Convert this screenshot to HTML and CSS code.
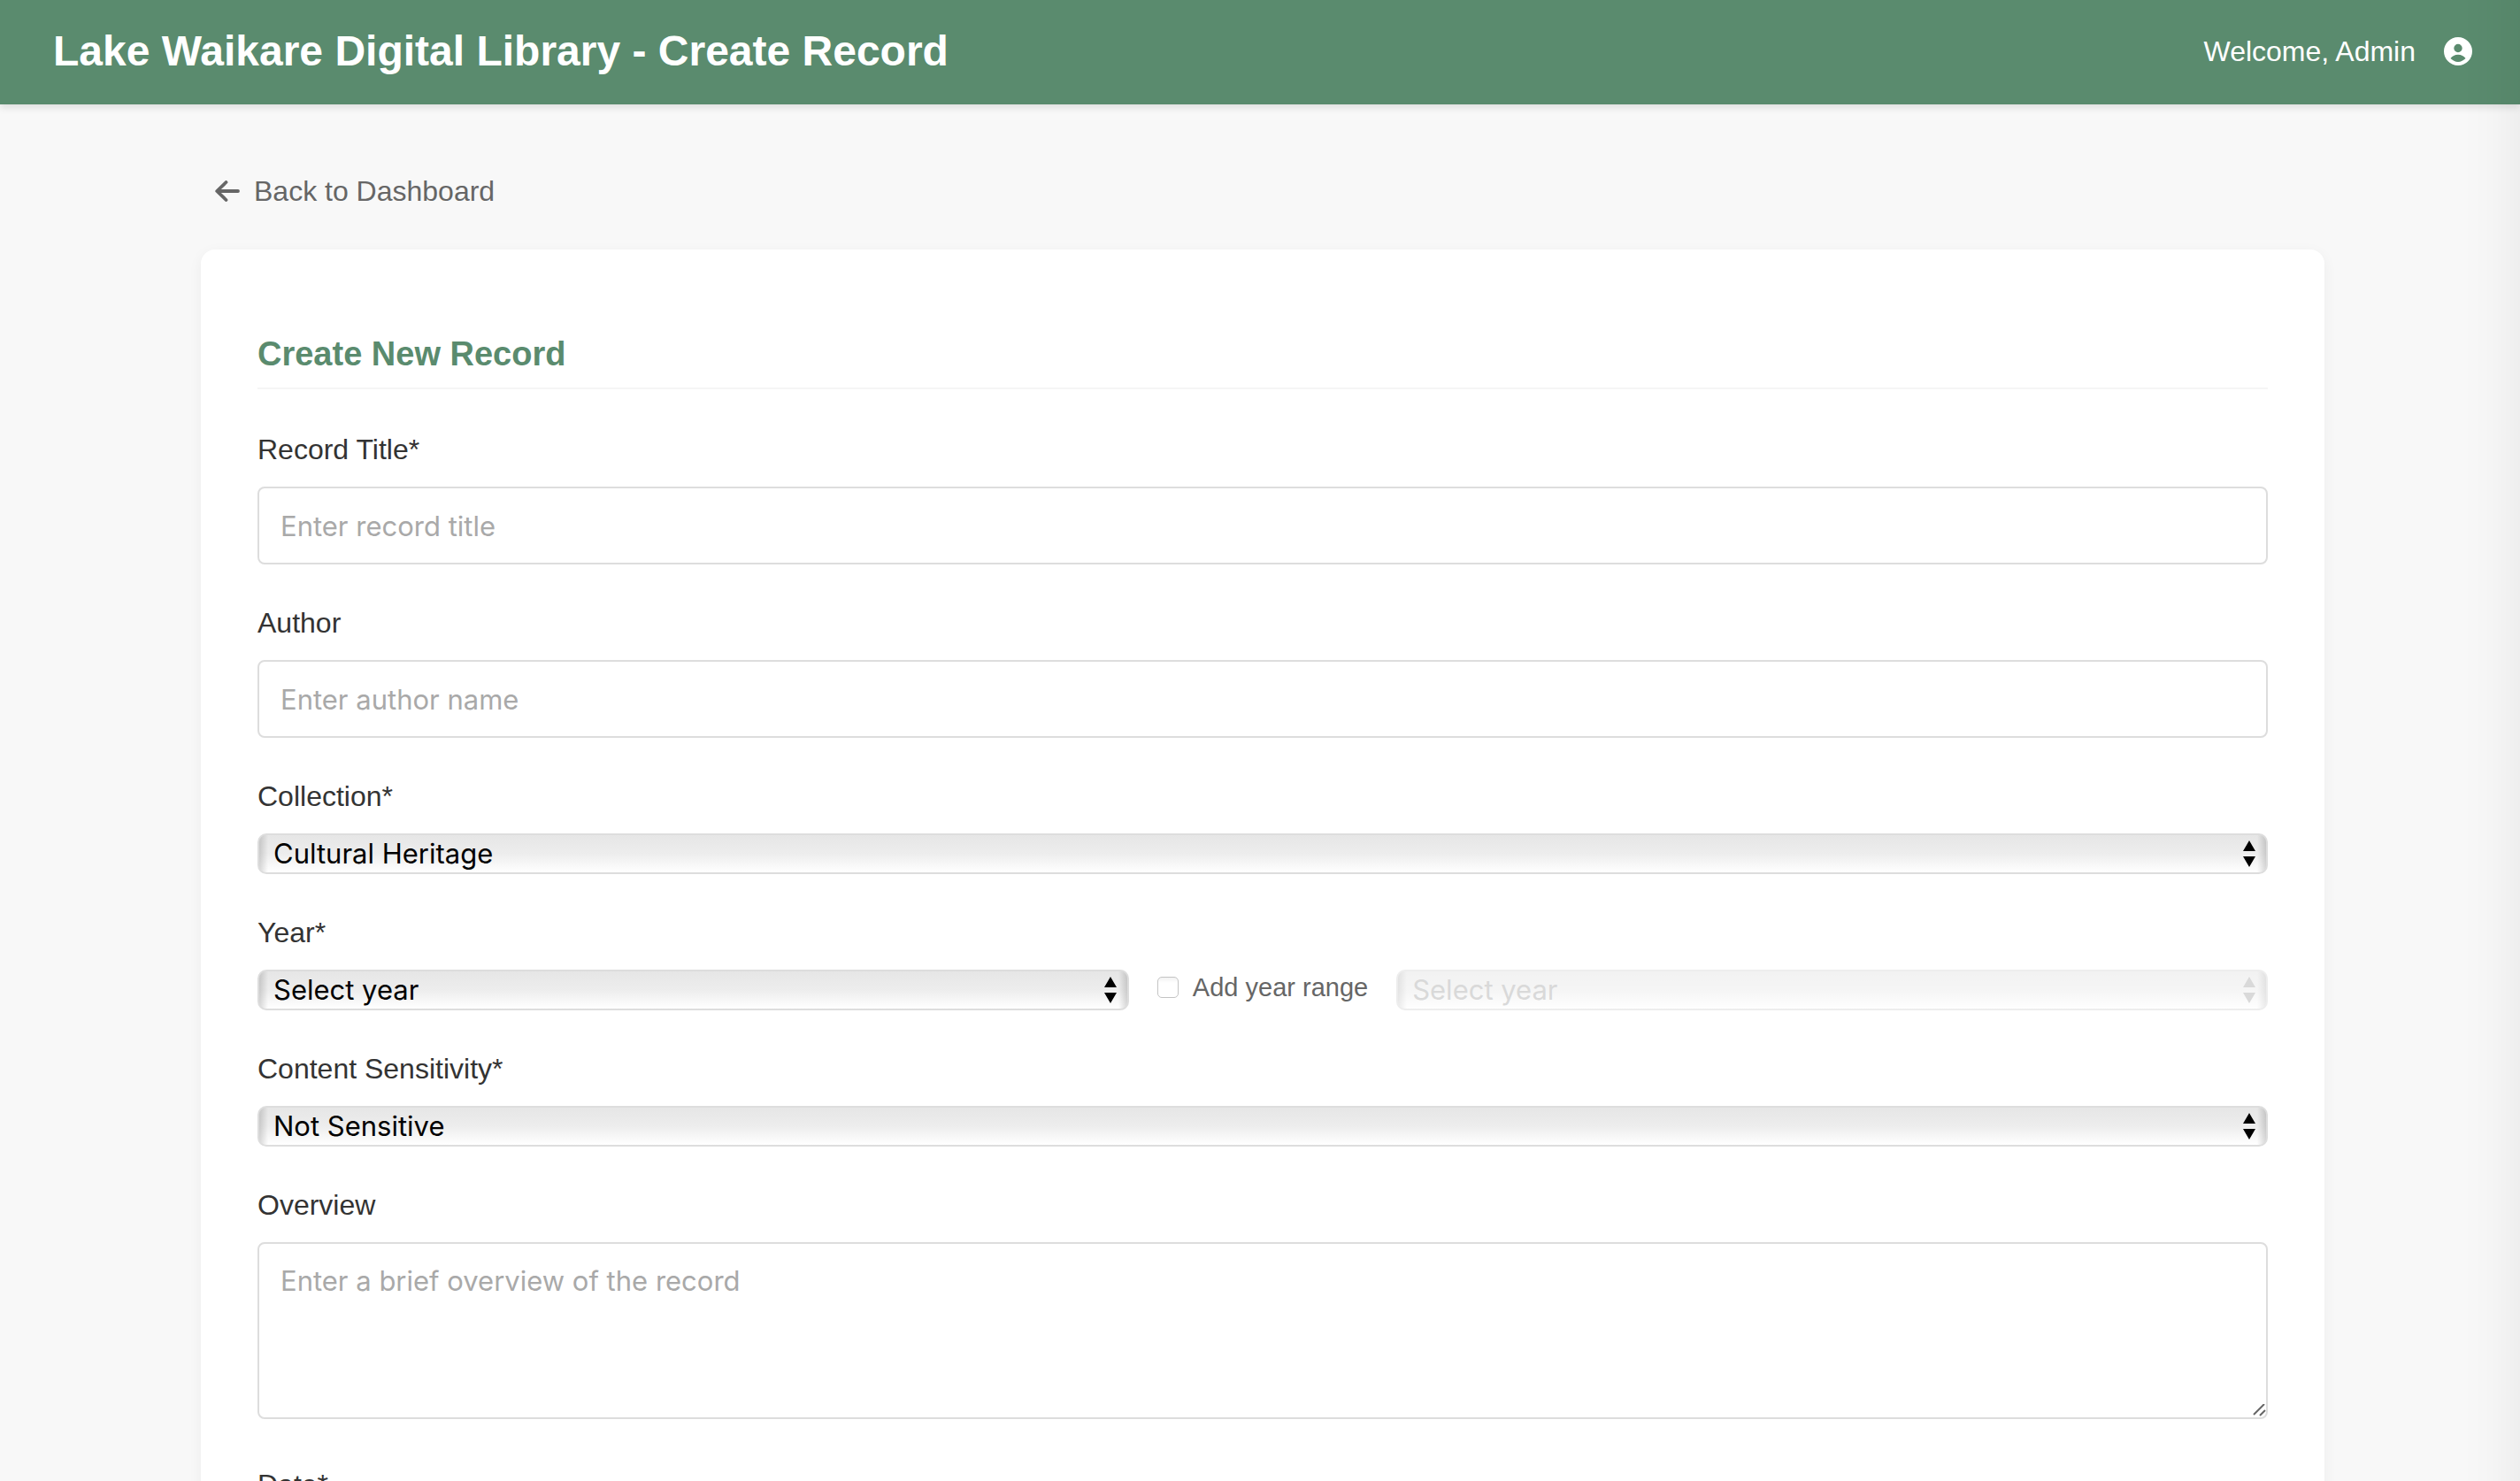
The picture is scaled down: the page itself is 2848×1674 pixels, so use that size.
FILE: index.html
```html
<!DOCTYPE html>
<html lang="en">
<head>
<meta charset="utf-8">
<meta name="viewport" content="width=device-width, initial-scale=1">
<title>Lake Waikare Digital Library - Create Record</title>
<link rel="stylesheet" href="styles.css">
</head>
<body>
<header class="site-header">
  <h1 class="site-title">Lake Waikare Digital Library - Create Record</h1>
  <div class="user">
    <span>Welcome, Admin</span>
    <svg class="user-icon" viewBox="0 0 32 32" aria-hidden="true">
      <path fill="currentColor" fill-rule="evenodd" d="M16 0a16 16 0 1 0 0 32a16 16 0 1 0 0-32zM16 7.800a4.700 4.700 0 1 1 0 9.400a4.700 4.700 0 1 1 0-9.400zM16 19.800c3.600 0 6.800 1.700 8.500 4.300c-2.300 2.400-5.200 3.900-8.500 3.900s-6.200-1.500-8.500-3.900c1.700-2.600 4.900-4.300 8.500-4.300z"/>
    </svg>
  </div>
</header>
<main class="page">
  <div class="container">
    <a class="back-link" href="#dashboard">
      <svg class="back-icon" viewBox="0 0 28 24" aria-hidden="true">
        <path d="M26 12H3M12.500 2L2.200 12L12.500 22" fill="none" stroke="currentColor" stroke-width="3.800" stroke-linecap="round" stroke-linejoin="round"/>
      </svg>
      <span>Back to Dashboard</span>
    </a>
    <form class="card">
      <h2 class="card-title">Create New Record</h2>
      <div class="field">
        <label class="label" for="title">Record Title*</label>
        <input class="text-input" id="title" type="text" placeholder="Enter record title">
      </div>
      <div class="field">
        <label class="label" for="author">Author</label>
        <input class="text-input" id="author" type="text" placeholder="Enter author name">
      </div>
      <div class="field">
        <label class="label" for="collection">Collection*</label>
        <select class="select" id="collection"><option>Cultural Heritage</option></select>
      </div>
      <div class="field">
        <label class="label" for="year">Year*</label>
        <div class="year-row">
          <select class="select" id="year"><option>Select year</option></select>
          <label class="range-toggle"><input class="checkbox" type="checkbox">Add year range</label>
          <select class="select" id="year-end" aria-label="End year" disabled><option>Select year</option></select>
        </div>
      </div>
      <div class="field">
        <label class="label" for="sensitivity">Content Sensitivity*</label>
        <select class="select" id="sensitivity"><option>Not Sensitive</option></select>
      </div>
      <div class="field field-area">
        <label class="label" for="overview">Overview</label>
        <textarea class="text-area" id="overview" placeholder="Enter a brief overview of the record"></textarea>
      </div>
      <div class="field">
        <label class="label" for="date">Date*</label>
        <input class="text-input" id="date" type="text">
      </div>
    </form>
  </div>
</main>
</body>
</html>
```
FILE: styles.css
```css
* { box-sizing: border-box; }

html { scrollbar-width: none; }

body {
  margin: 0;
  background: #f8f8f8;
  color: #333;
  font: 32px/36px "Liberation Sans", Arial, sans-serif;
}

/* Soft shade along the right window edge */
body::after {
  content: "";
  position: fixed;
  inset: 0 0 0 auto;
  width: 64px;
  background: linear-gradient(to right, transparent, rgba(0, 0, 0, 0.01) 50%, rgba(0, 0, 0, 0.04));
  pointer-events: none;
}

.site-header {
  display: flex;
  align-items: center;
  justify-content: space-between;
  padding: 31px 54px 33px 60px;
  background: #5a8b6e;
  color: #fff;
  box-shadow: 0 4px 8px rgba(0, 0, 0, 0.1);
}

.site-title {
  margin: 0;
  font-size: 48px;
  line-height: 54px;
}

.user {
  display: flex;
  align-items: center;
  gap: 32px;
}

.user-icon {
  width: 32px;
  height: 32px;
}

.page { padding: 64px 0 64px 6px; }

.container {
  max-width: 2400px;
  margin: 0 auto;
}

.back-link {
  display: flex;
  align-items: center;
  gap: 16px;
  width: fit-content;
  margin-bottom: 32px;
  padding: 16px;
  color: #666;
  text-decoration: none;
}

.back-icon {
  width: 28px;
  height: 24px;
}

.card {
  padding: 64px;
  background: #fff;
  border-radius: 16px;
  box-shadow: 0 4px 16px rgba(0, 0, 0, 0.05);
}

.card-title {
  margin: 30px 0 50px;
  padding-bottom: 14px;
  border-bottom: 2px solid #f5f5f5;
  color: #5a8b6e;
  font-size: 38px;
  line-height: 48px;
}

.field { margin-bottom: 48px; }

.field-area { margin-bottom: 56px; }

.label {
  display: block;
  margin-bottom: 24px;
}

.text-input,
.text-area {
  display: block;
  width: 100%;
  padding: 24px;
  border: 2px solid #ddd;
  border-radius: 8px;
  background: #fff;
  color: #333;
  font: 31px/36px Inter, "Liberation Sans", sans-serif;
}

.text-input { height: 88px; }

.text-area {
  height: 200px;
  resize: vertical;
}

.text-area::-webkit-resizer {
  background: url("data:image/svg+xml,%3Csvg xmlns='http://www.w3.org/2000/svg' width='15' height='15'%3E%3Cpath d='M1 12L13 0M8 13L14 7' stroke='%23666' stroke-width='2'/%3E%3C/svg%3E") no-repeat;
}

::placeholder {
  color: #a9a9a9;
  opacity: 1;
}

.select {
  display: block;
  width: 100%;
  height: 46px;
  padding: 0 40px 0 16px;
  border: 2px solid #ddd;
  border-radius: 10px;
  appearance: none;
  background:
    url("data:image/svg+xml,%3Csvg xmlns='http://www.w3.org/2000/svg' width='14' height='30'%3E%3Cpath d='M7 0L14 12H0zM7 30L0 18H14z'/%3E%3C/svg%3E") no-repeat right 12px center,
    linear-gradient(to right, rgba(0, 0, 0, 0.15), transparent 10px, transparent calc(100% - 10px), rgba(0, 0, 0, 0.15)),
    linear-gradient(#e6e6e6, #ededed 50%, #fff);
  color: #000;
  font: 31px/40px Inter, "Liberation Sans", sans-serif;
}

.select:disabled {
  background-image:
    url("data:image/svg+xml,%3Csvg xmlns='http://www.w3.org/2000/svg' width='14' height='30'%3E%3Cpath fill='%23b4b4b4' d='M7 0L14 12H0zM7 30L0 18H14z'/%3E%3C/svg%3E"),
    linear-gradient(to right, rgba(0, 0, 0, 0.15), transparent 10px, transparent calc(100% - 10px), rgba(0, 0, 0, 0.15)),
    linear-gradient(#e6e6e6, #ededed 50%, #fff);
  color: #b4b4b4;
  opacity: 0.5;
}

.year-row {
  display: grid;
  grid-template-columns: 1fr auto 1fr;
  align-items: start;
  gap: 32px;
}

.range-toggle {
  display: flex;
  align-items: center;
  gap: 16px;
  color: #666;
  font-size: 29px;
  line-height: 40px;
}

.checkbox {
  width: 24px;
  height: 24px;
  margin: 0;
  appearance: none;
  border: 1px solid #c4c4c4;
  border-radius: 5px;
  background: linear-gradient(#f2f2f2, #fff 6px);
}
```
